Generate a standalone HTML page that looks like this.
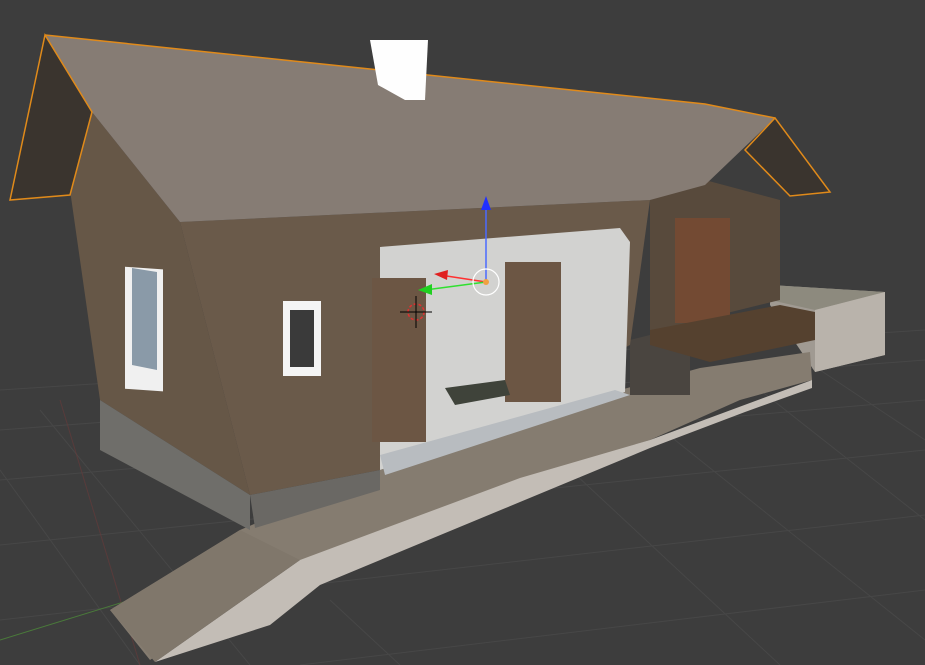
<!DOCTYPE html>
<html><head><meta charset="utf-8"><style>
html,body{margin:0;padding:0;background:#3d3d3d;overflow:hidden}
svg{display:block}
</style></head><body>
<svg width="925" height="665" viewBox="0 0 925 665" xmlns="http://www.w3.org/2000/svg">
<rect width="925" height="665" fill="#3d3d3d"/>
<g stroke="#474747" stroke-width="1" fill="none">
<path d="M0 430 L925 360 M0 480 L925 400 M0 545 L925 450 M0 620 L925 515 M300 665 L925 590 M0 390 L925 330"/>
<path d="M0 470 L140 665 M40 410 L250 665 M330 600 L400 665 M560 460 L780 665 M650 420 L925 640 M760 390 L925 520 M820 370 L925 440"/>
</g>
<path d="M0 640 L130 600" stroke="#4a7a3a" stroke-width="1"/>
<path d="M60 400 L140 665" stroke="#6a3a3a" stroke-width="1" opacity=".6"/>
<!-- right platform -->
<polygon points="770,285 885,292 885,355 815,372 770,305" fill="#a09a92"/>
<polygon points="770,285 885,292 815,310 770,300" fill="#8d8a7e"/>
<polygon points="815,310 885,292 885,355 815,372" fill="#b9b3ab"/>
<!-- pavement -->
<polygon points="240,530 380,470 620,390 700,368 810,352 812,380 740,400 650,440 520,480 320,560 300,560 150,660 110,610" fill="#857c70"/>
<polygon points="300,560 520,478 650,440 812,380 812,388 745,412 650,448 520,502 320,585 270,625 155,662" fill="#c3bdb6"/>
<polygon points="110,610 240,530 300,560 155,662" fill="#80776b"/>
<!-- steps -->
<polygon points="630,340 690,325 690,395 630,395" fill="#4a4540"/>
<!-- right wall -->
<polygon points="650,200 705,180 780,200 780,300 650,332" fill="#584a3c"/>
<rect x="675" y="218" width="55" height="105" fill="#734a33"/>
<polygon points="650,330 780,305 815,312 815,340 710,362 650,345" fill="#55412f"/>
<!-- left wall -->
<polygon points="70,190 92,112 180,222 250,495 100,400" fill="#665747"/>
<polygon points="100,400 250,495 250,530 100,450" fill="#6f6e6a"/>
<rect x="125" y="258" width="38" height="122" fill="#f0f0f0" transform="skewY(4)"/>
<polygon points="132,268 157,272 157,370 132,365" fill="#8a9aa8"/>
<!-- front wall -->
<polygon points="180,222 650,200 630,345 380,470 250,495" fill="#6a5a4a"/>
<polygon points="250,495 380,470 380,490 255,528" fill="#6a6864"/>
<rect x="283" y="301" width="38" height="75" fill="#f4f4f4"/>
<rect x="290" y="310" width="24" height="57" fill="#3a3a3a"/>
<!-- recess -->
<polygon points="380,247 620,228 630,242 625,392 380,470" fill="#d2d2d0"/>
<polygon points="380,455 615,390 630,395 385,475" fill="#b8bcc0"/>
<rect x="372" y="278" width="54" height="164" fill="#6c5644"/>
<rect x="505" y="262" width="56" height="140" fill="#6c5644"/>
<polygon points="445,388 505,380 510,395 455,405" fill="#3f433a"/>
<!-- roof -->
<polygon points="45,35 705,104 775,118 705,185 650,200 180,222 92,112" fill="#867c74"/>
<polygon points="45,35 10,200 70,195 92,112" fill="#3a342e" stroke="#e08a1a" stroke-width="1.5"/>
<polygon points="775,118 830,192 790,196 745,150" fill="#3a342e" stroke="#e08a1a" stroke-width="1.5"/>
<path d="M45,35 L705,104 L775,118" stroke="#e08a1a" stroke-width="1.5" fill="none"/>
<!-- chimney -->
<polygon points="370,40 428,40 425,100 405,100 378,85" fill="#fefefe"/>
<!-- gizmo -->
<line x1="486" y1="282" x2="486" y2="200" stroke="#4a6aff" stroke-width="1.5"/>
<polygon points="481,210 486,196 491,210" fill="#2030ff"/>
<line x1="486" y1="282" x2="440" y2="275" stroke="#ff3030" stroke-width="1.5"/>
<polygon points="448,270 434,274 447,280" fill="#e02020"/>
<line x1="486" y1="282" x2="425" y2="290" stroke="#30e030" stroke-width="1.5"/>
<polygon points="432,284 418,290 432,295" fill="#20d020"/>
<circle cx="486" cy="282" r="13" fill="none" stroke="#fff" stroke-width="1.2"/>
<circle cx="486" cy="282" r="3" fill="#f0a040"/>
<circle cx="416" cy="312" r="8" fill="none" stroke="#e03030" stroke-width="1.5" stroke-dasharray="3 2"/>
<path d="M400 312 H432 M416 296 V328" stroke="#000" stroke-width="1"/>
</svg>
</body></html>
